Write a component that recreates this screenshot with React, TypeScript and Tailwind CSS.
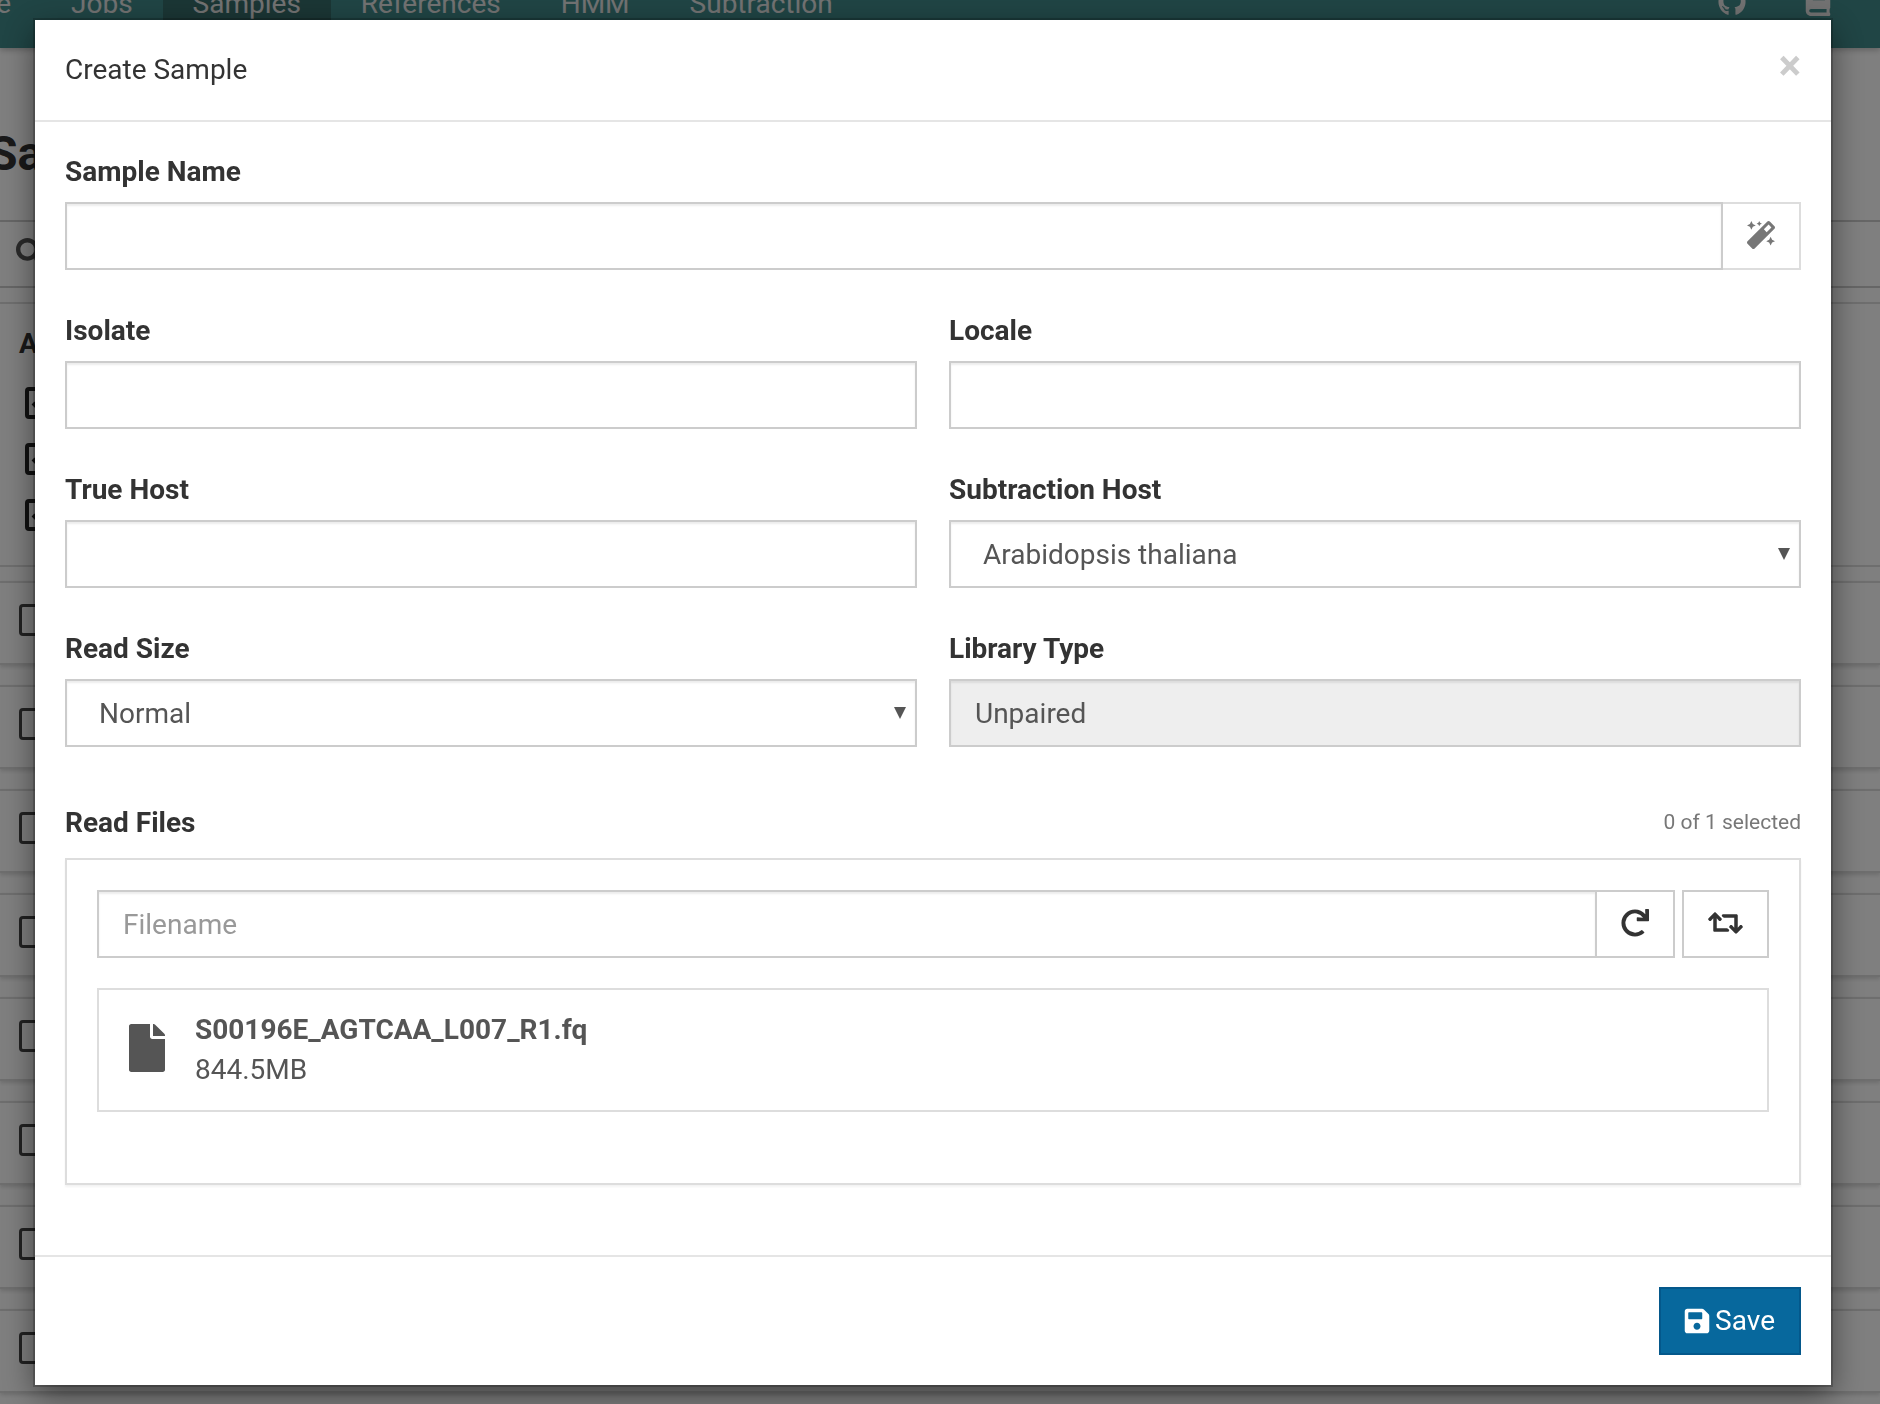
import { useState, type ReactNode } from "react";
import { FaBook, FaFile, FaGithub, FaMagic, FaRedo, FaRetweet, FaSave, FaSearch } from "react-icons/fa";

const controlClass =
  "block h-[68px] w-full min-w-0 appearance-none rounded-none border-2 border-[#ccc] bg-white px-6 text-[28px] leading-10 text-[#555] shadow-[inset_0_2px_2px_rgba(0,0,0,0.075)] outline-none placeholder:text-[#999] placeholder:opacity-100 read-only:bg-[#eee] focus:border-[#66afe9]";

const samples = [1, 2, 3, 4, 5, 6, 7, 8];
const filters = ["None", "Pathoscope", "NuVs"];

function NavLink({ children, active = false }: { children: ReactNode; active?: boolean }) {
  return (
    <a href="#" className={active ? "bg-[#366c6a] px-[30px] pb-6" : "px-[30px] pb-6"}>
      {children}
    </a>
  );
}

function NavBar() {
  return (
    <nav className="relative z-10 flex h-12 items-end justify-between bg-[#408a8a] text-[28px] leading-10 text-[#e4e4e4] shadow-[0_2px_6px_rgba(0,0,0,0.25)]">
      <div className="flex items-end">
        <div className="flex w-[41px] justify-end overflow-hidden">
          <NavLink>Home</NavLink>
        </div>
        <NavLink>Jobs</NavLink>
        <NavLink active>Samples</NavLink>
        <NavLink>References</NavLink>
        <NavLink>HMM</NavLink>
        <NavLink>Subtraction</NavLink>
      </div>
      <div className="flex gap-[58px] pr-12 pb-8">
        <a href="#" aria-label="GitHub">
          <FaGithub />
        </a>
        <a href="#" aria-label="Documentation">
          <FaBook />
        </a>
      </div>
    </nav>
  );
}

function FilterBox({ label }: { label: string }) {
  return (
    <div className="grid size-8">
      <input
        type="checkbox"
        aria-label={label}
        defaultChecked
        className="col-start-1 row-start-1 size-8 appearance-none rounded-sm border-4 border-[#222]"
      />
      <svg viewBox="0 0 32 32" className="pointer-events-none col-start-1 row-start-1 size-8" aria-hidden="true">
        <path d="M8 16l6 6 11-12" fill="none" stroke="#222" strokeWidth="4" />
      </svg>
    </div>
  );
}

function SamplesPage() {
  return (
    <div className="h-screen overflow-hidden bg-white text-[28px] text-[#333]" inert>
      <NavBar />
      <div className="flex h-[172px] items-center overflow-hidden">
        <h1 className="-ml-3 pt-10 text-[48px] leading-[52px] font-bold">Samples</h1>
      </div>
      <div className="flex h-[68px] items-center border-y-2 border-[#ccc] pb-1 pl-4">
        <FaSearch className="size-7 text-[#555]" />
      </div>
      <div className="mt-[14px] h-[265px] border-y-2 border-[#ddd] pt-5 pl-[19px]">
        <h2 className="leading-10 font-bold">Analyses</h2>
        <div className="mt-[23px] flex flex-col gap-6 pl-[6px]">
          {filters.map((label) => (
            <FilterBox key={label} label={label} />
          ))}
        </div>
      </div>
      <ul className="mt-[14px] flex flex-col gap-5">
        {samples.map((id) => (
          <li
            key={id}
            className="flex h-[84px] shrink-0 items-center border-y-2 border-[#ddd] pl-[19px] shadow-[0_2px_4px_rgba(0,0,0,0.15)]"
          >
            <input
              type="checkbox"
              aria-label={`Sample ${id}`}
              className="mb-[6px] size-8 appearance-none rounded-sm border-[3px] border-[#444]"
            />
          </li>
        ))}
      </ul>
    </div>
  );
}

function Field({ id, label, children }: { id: string; label: string; children: ReactNode }) {
  return (
    <div className="pb-[41px]">
      <label htmlFor={id} className="mb-[10px] block leading-10 font-bold">
        {label}
      </label>
      {children}
    </div>
  );
}

function Select({ id, options }: { id: string; options: string[] }) {
  return (
    <div className="relative">
      <select
        id={id}
        className="block h-[68px] w-full appearance-none rounded-none border-2 border-[#ccc] bg-white pt-[2px] pr-6 pl-8 text-[28px] leading-10 text-[#555] shadow-[inset_0_2px_2px_rgba(0,0,0,0.075)] outline-none focus:border-[#66afe9]"
      >
        {options.map((option) => (
          <option key={option}>{option}</option>
        ))}
      </select>
      <svg
        viewBox="0 0 12 12"
        aria-hidden="true"
        className="pointer-events-none absolute top-7 right-[11px] size-3 fill-[#555]"
      >
        <path d="M0 0h12L6 12z" />
      </svg>
    </div>
  );
}

const buttonClass = "flex h-[68px] shrink-0 items-center justify-center border-2 text-[28px]";

function ReadFiles() {
  return (
    <section className="pt-[15px] pb-[40px]">
      <div className="mb-[15px] flex items-start justify-between">
        <h3 className="leading-10 font-bold">Read Files</h3>
        <span className="text-[21px] leading-[38px] text-[#777]">0 of 1 selected</span>
      </div>
      <div className="border-2 border-[#ddd] px-[30px] pt-[30px] pb-[71px] shadow-[0_2px_2px_rgba(0,0,0,0.05)]">
        <div className="flex">
          <input type="text" aria-label="Filename" placeholder="Filename" className={controlClass} />
          <button
            type="button"
            aria-label="Reset"
            className={`${buttonClass} -ml-[2px] w-20 border-[#ccc] bg-white pb-[2px] text-[#333]`}
          >
            <FaRedo />
          </button>
          <button
            type="button"
            aria-label="Swap"
            className={`${buttonClass} ml-[7px] w-[87px] border-[#ccc] bg-white pb-[2px] text-[#333]`}
          >
            <FaRetweet className="h-7 w-[35px]" />
          </button>
        </div>
        <button
          type="button"
          className="mt-[30px] flex w-full items-center gap-[30px] border-2 border-[#ddd] px-[30px] py-5 text-left text-[#555]"
        >
          <FaFile className="mb-1 h-12 w-9" />
          <span className="leading-10">
            <strong className="block font-bold">S00196E_AGTCAA_L007_R1.fq</strong>
            <span className="block">844.5MB</span>
          </span>
        </button>
      </div>
    </section>
  );
}

function CreateSample() {
  const [name, setName] = useState("");
  return (
    <form
      role="dialog"
      aria-labelledby="dialog-title"
      onSubmit={(event) => event.preventDefault()}
      className="bg-white text-[28px] text-[#333] shadow-[0_0_0_2px_rgba(0,0,0,0.2),0_10px_30px_rgba(0,0,0,0.5)]"
    >
      <header className="flex items-start justify-between border-b-2 border-[#e5e5e5] p-[30px]">
        <h2 id="dialog-title" className="leading-10">
          Create Sample
        </h2>
        <button type="button" aria-label="Close" className="text-[42px] leading-8 font-bold text-[#ccc]">
          ×
        </button>
      </header>
      <div className="p-[30px]">
        <Field id="name" label="Sample Name">
          <div className="flex">
            <input
              id="name"
              type="text"
              value={name}
              onChange={(event) => setName(event.target.value)}
              className={`${controlClass} relative`}
            />
            <button
              type="button"
              aria-label="Auto-fill name"
              className={`${buttonClass} -ml-[2px] w-20 border-[#ddd] pb-[2px] text-[#777]`}
            >
              <FaMagic />
            </button>
          </div>
        </Field>
        <div className="grid grid-cols-2 gap-x-8">
          <Field id="isolate" label="Isolate">
            <input id="isolate" type="text" className={controlClass} />
          </Field>
          <Field id="locale" label="Locale">
            <input id="locale" type="text" className={controlClass} />
          </Field>
          <Field id="host" label="True Host">
            <input id="host" type="text" className={controlClass} />
          </Field>
          <Field id="subtraction" label="Subtraction Host">
            <Select id="subtraction" options={["Arabidopsis thaliana"]} />
          </Field>
          <Field id="read-size" label="Read Size">
            <Select id="read-size" options={["Normal", "sRNA"]} />
          </Field>
          <Field id="library" label="Library Type">
            <input id="library" type="text" readOnly value="Unpaired" className={controlClass} />
          </Field>
        </div>
        <ReadFiles />
      </div>
      <footer className="flex justify-end border-t-2 border-[#e5e5e5] p-[30px]">
        <button
          type="submit"
          className={`${buttonClass} gap-1 border-[#04588b] bg-[#07689d] pr-6 pl-[22px] text-white`}
        >
          <FaSave />
          Save
        </button>
      </footer>
    </form>
  );
}

export default function App() {
  return (
    <div className="font-[Roboto,sans-serif]">
      <SamplesPage />
      <div className="fixed inset-0 z-20 overflow-hidden bg-black/50 pt-5 pr-[49px] pl-[35px]">
        <CreateSample />
      </div>
    </div>
  );
}
